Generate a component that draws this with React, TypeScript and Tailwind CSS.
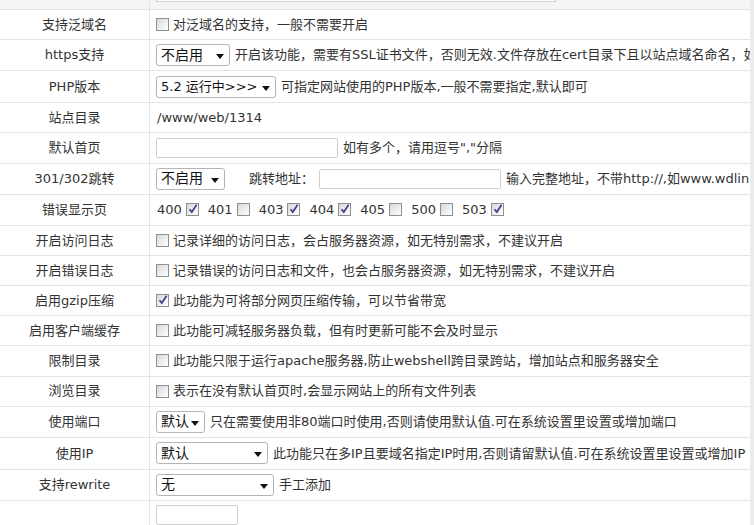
import React from "react";

const font = { fontFamily: '"DejaVu Sans", "Noto Sans CJK SC", sans-serif' };

function Box({ checked = false }: { checked?: boolean }) {
  return (
    <span className="relative inline-block w-[13px] h-[13px] shrink-0 border border-[#8e8f8f] bg-gradient-to-br from-[#d8d8d8] to-[#ffffff]">
      {checked && (
        <svg className="absolute left-[1px] top-[0px]" width="10" height="10" viewBox="0 0 10 10">
          <path d="M1.5 5.2 L3.8 8 L8.6 0.8" fill="none" stroke="#3b3f8f" strokeWidth="1.7" />
        </svg>
      )}
    </span>
  );
}

function Select({ text, w, size = "text-[14px]" }: { text: string; w: string; size?: string }) {
  return (
    <span
      className={`relative inline-flex items-center h-[22px] ${w} shrink-0 border border-[#b5b5b5] rounded-[3px] bg-white pl-[4px] ${size} text-[#111]`}
    >
      {text}
      <span className="absolute right-[5px] top-[9px] w-0 h-0 border-l-[4px] border-r-[4px] border-t-[5px] border-l-transparent border-r-transparent border-t-[#111]" />
    </span>
  );
}

function Input({ w }: { w: string }) {
  return <span className={`inline-block h-[20px] ${w} shrink-0 border border-[#cfcfcf] rounded-[2px] bg-white`} />;
}

function Row({ label, h, children }: { label: string; h: string; children?: React.ReactNode }) {
  return (
    <div className={`flex ${h} border-b border-[#e3e3ea]`}>
      <div className="w-[150px] shrink-0 flex items-center justify-center text-[#333] border-r border-[#e3e3ea]">
        {label}
      </div>
      <div className="flex-1 min-w-0 flex items-center pl-[6px] gap-[5px] whitespace-nowrap overflow-hidden text-[#333]">
        {children}
      </div>
    </div>
  );
}

const codes: [string, boolean][] = [
  ["400", true],
  ["401", false],
  ["403", true],
  ["404", true],
  ["405", false],
  ["500", false],
  ["503", true],
];

export default function App() {
  return (
    <div className="flex w-[754px] h-[525px] overflow-hidden bg-white text-[13px]" style={font}>
      <div className="w-[750px] shrink-0 flex flex-col">
        <div className="flex h-[10px] shrink-0 border-b border-[#e3e3ea] bg-[#f5f5f5]">
          <div className="w-[150px] shrink-0 border-r border-[#e3e3ea]" />
          <div className="flex-1 pl-[6px]">
            <div className="w-[400px] h-[2px] bg-white border-x border-b border-[#d0d0d0]" />
          </div>
        </div>
        <Row label="支持泛域名" h="h-[31px]">
          <Box />
          <span className="-ml-[1px]">对泛域名的支持，一般不需要开启</span>
        </Row>
        <Row label="https支持" h="h-[32px]">
          <Select text="不启用" w="w-[74px]" />
          <span>开启该功能，需要有SSL证书文件，否则无效.文件存放在cert目录下且以站点域名命名，如</span>
        </Row>
        <Row label="PHP版本" h="h-[33px]">
          <Select text="5.2 运行中>>>" w="w-[120px]" size="text-[13px]" />
          <span>可指定网站使用的PHP版本,一般不需要指定,默认即可</span>
        </Row>
        <Row label="站点目录" h="h-[31px]">
          <span className="pl-[1px]">/www/web/1314</span>
        </Row>
        <Row label="默认首页" h="h-[31px]">
          <Input w="w-[182px]" />
          <span>如有多个，请用逗号","分隔</span>
        </Row>
        <Row label="301/302跳转" h="h-[32px]">
          <Select text="不启用" w="w-[69px]" />
          <span className="ml-[19px]">跳转地址：</span>
          <Input w="w-[182px]" />
          <span>输入完整地址，不带http://,如www.wdlinux.cn</span>
        </Row>
        <Row label="错误显示页" h="h-[32px]">
          <div className="flex items-center pl-[1px]">
            {codes.map(([c, on]) => (
              <span key={c} className="flex items-center gap-[4px] mr-[9px]">
                <span>{c}</span>
                <Box checked={on} />
              </span>
            ))}
          </div>
        </Row>
        <Row label="开启访问日志" h="h-[31px]">
          <Box />
          <span className="-ml-[1px]">记录详细的访问日志，会占服务器资源，如无特别需求，不建议开启</span>
        </Row>
        <Row label="开启错误日志" h="h-[31px]">
          <Box />
          <span className="-ml-[1px]">记录错误的访问日志和文件，也会占服务器资源，如无特别需求，不建议开启</span>
        </Row>
        <Row label="启用gzip压缩" h="h-[31px]">
          <Box checked />
          <span className="-ml-[1px]">此功能为可将部分网页压缩传输，可以节省带宽</span>
        </Row>
        <Row label="启用客户端缓存" h="h-[31px]">
          <Box />
          <span className="-ml-[1px]">此功能可减轻服务器负载，但有时更新可能不会及时显示</span>
        </Row>
        <Row label="限制目录" h="h-[31px]">
          <Box />
          <span className="-ml-[1px]">此功能只限于运行apache服务器,防止webshell跨目录跨站，增加站点和服务器安全</span>
        </Row>
        <Row label="浏览目录" h="h-[31px]">
          <Box />
          <span className="-ml-[1px]">表示在没有默认首页时,会显示网站上的所有文件列表</span>
        </Row>
        <Row label="使用端口" h="h-[32px]">
          <Select text="默认" w="w-[49px]" />
          <span>只在需要使用非80端口时使用,否则请使用默认值.可在系统设置里设置或增加端口</span>
        </Row>
        <Row label="使用IP" h="h-[33px]">
          <Select text="默认" w="w-[112px]" />
          <span>此功能只在多IP且要域名指定IP时用,否则请留默认值.可在系统设置里设置或增加IP</span>
        </Row>
        <Row label="支持rewrite" h="h-[32px]">
          <Select text="无" w="w-[118px]" />
          <span>手工添加</span>
        </Row>
        <div className="flex flex-1">
          <div className="w-[150px] shrink-0 border-r border-[#e3e3ea]" />
          <div className="flex-1 pl-[6px] pt-[4px]">
            <div className="w-[82px] h-[20px] border border-[#cfcfcf] rounded-[2px]" />
          </div>
        </div>
      </div>
      <div className="w-[4px] shrink-0 bg-[#ececec]" />
    </div>
  );
}
